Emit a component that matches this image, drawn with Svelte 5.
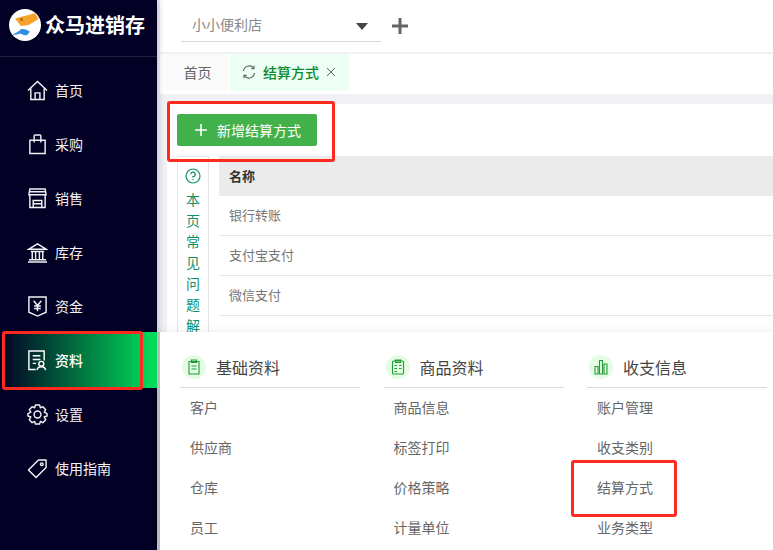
<script lang="ts">
  const nav = [
    { label: '首页', icon: 'home' },
    { label: '采购', icon: 'bag' },
    { label: '销售', icon: 'shop' },
    { label: '库存', icon: 'bank' },
    { label: '资金', icon: 'money' },
    { label: '资料', icon: 'doc', active: true },
    { label: '设置', icon: 'gear' },
    { label: '使用指南', icon: 'tag' }
  ];

  const rows = ['银行转账', '支付宝支付', '微信支付'];
  const helpText = '本页常见问题解答'.split('');

  const groups = [
    { title: '基础资料', icon: 'clip', items: ['客户', '供应商', '仓库', '员工'] },
    { title: '商品资料', icon: 'list', items: ['商品信息', '标签打印', '价格策略', '计量单位'] },
    { title: '收支信息', icon: 'bars', items: ['账户管理', '收支类别', '结算方式', '业务类型'] }
  ];
</script>

<div class="app">
  <aside class="sidebar">
    <div class="brand">
      <svg class="logo" viewBox="0 0 32 32">
        <circle cx="16" cy="16" r="16" fill="#fff" />
        <path d="M6 9.5 L26 4.3 L29.5 10 L19.5 16 L12 17 Z" fill="#f5a227" />
        <circle cx="12.5" cy="10.5" r="1.5" fill="#b5651d" />
        <path d="M3.5 25.5 Q8 24 12.5 20 Q17 19.5 21 22.7 L17.5 26.5 Q14 26 11 24.5 Q7 26.5 3.5 25.5 Z" fill="#2f8fe0" />
      </svg>
      <span class="brand-name">众马进销存</span>
    </div>
    <nav class="nav">
      {#each nav as item}
        <div class="nav-item" class:active={item.active}>
          <svg class="nav-icon" viewBox="0 0 22 22" fill="none" stroke="currentColor" stroke-width="1.5">
            {#if item.icon === 'home'}
              <path d="M1 11 L11 1.5 L21 11 M4 9 V20.5 H18 V9 M8.5 20.5 V13.5 H13.5 V20.5" />
            {:else if item.icon === 'bag'}
              <path d="M3 6.5 H19 V20.5 H3 Z M7.5 9 V2 Q7.5 1 8.5 1 H13.5 Q14.5 1 14.5 2 V9" />
            {:else if item.icon === 'shop'}
              <path d="M3 1 H19 L20 7 H2 Z M3 7 V20.5 H19 V7 M2.5 4 H19.5 M6.5 20.5 V13 H15.5 V20.5 M6.5 16.5 H15.5" />
            {:else if item.icon === 'bank'}
              <path d="M2 7.5 L11 2 L20 7.5 Z M4 10 H18 M5.5 10 V18 M9 10 V18 M13 10 V18 M16.5 10 V18 M2 18.5 H20 M1 21 H21" />
            {:else if item.icon === 'money'}
              <path d="M2 1 H20 V17 L11 21 L2 17 Z M7 5 L11 10 L15 5 M11 10 V16 M7.5 10.5 H14.5 M7.5 13 H14.5" />
            {:else if item.icon === 'doc'}
              <path d="M18 11 V1 H2 V20.5 H9 M6 6 H14 M6 10 H14 M6 14 H9.5" />
              <circle cx="15" cy="14.5" r="2.6" />
              <path d="M10.5 21 Q11 17.5 15 17.5 Q19 17.5 19.5 21" />
            {:else if item.icon === 'gear'}
              <path d="M8.8 1 H13.2 L14 4 L16.6 2.8 L19.6 6 L18 8.6 L21 10 V12.6 L18 13.6 L19.6 16.4 L16.6 19.6 L14 18.2 L13.2 21 H8.8 L8 18.2 L5.4 19.6 L2.4 16.4 L4 13.6 L1 12.6 V10 L4 8.6 L2.4 6 L5.4 2.8 L8 4 Z" stroke-linejoin="round" />
              <circle cx="11" cy="11" r="3.6" />
            {:else if item.icon === 'tag'}
              <path d="M1.5 12.5 L12 2 H20 V10 L9.5 20.5 Z" stroke-linejoin="round" />
              <circle cx="15.5" cy="6.5" r="1.4" />
            {/if}
          </svg>
          <span>{item.label}</span>
        </div>
      {/each}
    </nav>
  </aside>

  <main class="main">
    <header class="topbar">
      <div class="store">
        <span>小小便利店</span>
        <i class="caret"></i>
      </div>
      <svg class="add" viewBox="0 0 16 16"><path d="M8 0 V16 M0 8 H16" stroke="#666" stroke-width="3" /></svg>
    </header>

    <div class="tabs">
      <div class="tab">首页</div>
      <div class="tab current">
        <svg class="refresh" viewBox="0 0 14 14" fill="none" stroke="#666" stroke-width="1.2">
          <path d="M1.5 6 A5.6 5.6 0 0 1 11.5 3.2 M12.5 8 A5.6 5.6 0 0 1 2.5 10.8" />
          <path d="M12 0.8 V3.6 H9.4 M2 13.2 V10.4 H4.6" />
        </svg>
        <span class="tab-name">结算方式</span>
        <svg class="close" viewBox="0 0 10 10"><path d="M1 1 L9 9 M9 1 L1 9" stroke="#666" stroke-width="1" /></svg>
      </div>
    </div>

    <section class="card">
      <button class="add-btn">
        <svg viewBox="0 0 12 12"><path d="M6 0 V12 M0 6 H12" stroke="#fff" stroke-width="1.6" /></svg>
        新增结算方式
      </button>
      <div class="body">
        <div class="help">
          <svg viewBox="0 0 16 16" fill="none" stroke="#0f8f6b" stroke-width="1.2">
            <circle cx="8" cy="8" r="7" />
            <path d="M5.8 6.2 A2.2 2.2 0 1 1 8 8.6 V9.8 M8 11 V12.2" />
          </svg>
          {#each helpText as ch}
            <span>{ch}</span>
          {/each}
        </div>
        <div class="table">
          <div class="thead">名称</div>
          {#each rows as row}
            <div class="row">{row}</div>
          {/each}
        </div>
      </div>
    </section>
  </main>

  <div class="flyout">
    {#each groups as group}
      <div class="group">
        <div class="group-head">
          <span class="badge">
            <svg viewBox="0 0 14 16" fill="none" stroke="#1f9d35" stroke-width="1.1">
              {#if group.icon === 'clip'}
                <path d="M2 2.5 H12 V15 H2 Z M4.5 1 H9.5 V3.5 H4.5 Z M4.5 7 H9.5 M4.5 10 H9.5" />
              {:else if group.icon === 'list'}
                <path d="M2.5 2 Q1.5 2 1.5 3 V14 Q1.5 15 2.5 15 H11.5 Q12.5 15 12.5 14 V3 Q12.5 2 11.5 2 Z M4.5 1 H9.5 V3.5 H4.5 Z M3.5 6.5 H6 M8 6.5 H10.5 M3.5 9.5 H6 M8 9.5 H10.5 M3.5 12.5 H6" />
              {:else}
                <path d="M1 7.5 H4 V15 H1 Z M5.5 1.5 H8.5 V15 H5.5 Z M10 5 H13 V15 H10 Z" stroke-linejoin="round" />
              {/if}
            </svg>
          </span>
          <span class="group-title">{group.title}</span>
        </div>
        {#each group.items as item}
          <div class="group-item">{item}</div>
        {/each}
      </div>
    {/each}
  </div>

  <div class="mark mark-nav"></div>
  <div class="mark mark-btn"></div>
  <div class="mark mark-link"></div>
</div>

<style>
  :global(body) {
    margin: 0;
    overflow: hidden;
  }

  .app {
    position: relative;
    display: flex;
    width: 773px;
    height: 550px;
    overflow: hidden;
    background: #f0f0f5;
    font-family: "Noto Sans CJK SC", "Liberation Sans", sans-serif;
  }

  .sidebar {
    position: relative;
    z-index: 1;
    width: 157px;
    flex-shrink: 0;
    background: #020024;
    color: #f2f2f5;
    box-shadow: 2px 0 6px rgba(0, 0, 0, 0.18);
  }

  .brand {
    display: flex;
    align-items: center;
    gap: 4px;
    height: 57px;
    padding: 0 0 7px 9px;
    box-sizing: border-box;
    border-bottom: 1px solid #22213f;
  }

  .logo {
    width: 32px;
    height: 32px;
  }

  .brand-name {
    color: #fff;
    font-size: 20px;
    font-weight: 700;
    line-height: 1;
  }

  .nav {
    padding-top: 6px;
  }

  .nav-item {
    display: flex;
    align-items: center;
    gap: 7px;
    height: 54px;
    padding-left: 27px;
    font-size: 14px;
  }

  .nav-item.active {
    margin: -1px 0;
    height: 56px;
    background: linear-gradient(90deg, #020024, #00e25b);
    color: #fff;
    font-weight: 500;
  }

  .nav-icon {
    width: 21px;
    height: 21px;
    flex-shrink: 0;
  }

  .main {
    flex: 1;
    min-width: 0;
    margin-left: 3px;
  }

  .topbar {
    display: flex;
    align-items: center;
    gap: 11px;
    height: 52px;
    margin-bottom: 2px;
    padding-left: 21px;
    background: #fff;
  }

  .store {
    display: flex;
    align-self: flex-start;
    align-items: center;
    justify-content: space-between;
    width: 200px;
    height: 42px;
    padding: 8px 13px 2px 11px;
    box-sizing: border-box;
    border-bottom: 1px solid #d9d9d9;
    color: #888;
    font-size: 14px;
  }

  .caret {
    width: 0;
    height: 0;
    margin-top: 5px;
    border-top: 7px solid #444;
    border-left: 6px solid transparent;
    border-right: 6px solid transparent;
  }

  .add {
    width: 16px;
    height: 16px;
  }

  .tabs {
    display: flex;
    align-items: flex-start;
    gap: 2px;
    height: 40px;
    padding-left: 5px;
    background: #fff;
  }

  .tab {
    display: flex;
    align-items: center;
    justify-content: center;
    width: 63px;
    height: 37px;
    padding: 0 0 2px 2px;
    box-sizing: border-box;
    background: #fafafa;
    color: #666;
    font-size: 14px;
  }

  .tab.current {
    justify-content: flex-start;
    width: 119px;
    padding-left: 12px;
    gap: 7px;
    background: #edfff4;
  }

  .tab-name {
    color: #0a8a2c;
    font-weight: 500;
  }

  .refresh {
    width: 14px;
    height: 14px;
  }

  .close {
    width: 10px;
    height: 10px;
  }

  .card {
    margin: 10px 0 0 7px;
    height: 446px;
    padding: 10px 0 0 10px;
    box-sizing: border-box;
    background: #fff;
  }

  .add-btn {
    display: flex;
    align-items: center;
    gap: 10px;
    width: 140px;
    height: 32px;
    padding: 0 0 0 18px;
    border: none;
    border-radius: 2px;
    background: #43b14b;
    color: #fff;
    font-family: inherit;
    font-size: 14px;
    white-space: nowrap;
  }

  .add-btn svg {
    width: 12px;
    height: 12px;
  }

  .body {
    display: flex;
    gap: 10px;
    margin-top: 10px;
  }

  .help {
    display: flex;
    flex-direction: column;
    align-items: center;
    width: 32px;
    padding-top: 11px;
    box-sizing: border-box;
    border: 1px solid #e5e5e5;
    color: #0f8f6b;
    font-size: 14px;
  }

  .help svg {
    width: 16px;
    height: 16px;
    margin-bottom: 5px;
  }

  .help span {
    height: 21px;
    line-height: 21px;
  }

  .table {
    flex: 1;
    font-size: 13px;
    color: #777;
  }

  .thead {
    display: flex;
    align-items: center;
    height: 40px;
    padding: 0 0 2px 10px;
    box-sizing: border-box;
    background: #ebebeb;
    color: #333;
    font-weight: 700;
  }

  .row {
    display: flex;
    align-items: center;
    height: 40px;
    padding: 0 0 2px 10px;
    box-sizing: border-box;
    border-bottom: 1px solid #e8e8e8;
  }

  .flyout {
    position: absolute;
    z-index: 2;
    left: 157px;
    top: 332px;
    right: 0;
    bottom: 0;
    display: grid;
    grid-template-columns: repeat(3, 180px);
    gap: 23.5px;
    padding-left: 20px;
    background: #fff;
    box-shadow: 0 -2px 6px rgba(0, 0, 0, 0.06);
    border-left: 3px solid;
    border-image: linear-gradient(90deg, #bbb 66%, #4caf50 66%) 1;
  }

  .group-head {
    display: flex;
    align-items: flex-end;
    gap: 10px;
    height: 56px;
    padding: 0 0 8px 2px;
    box-sizing: border-box;
    border-bottom: 1px solid #d9d9d9;
  }

  .badge {
    display: flex;
    align-items: center;
    justify-content: center;
    width: 24px;
    height: 24px;
    border-radius: 50%;
    background: #e4fbe4;
  }

  .badge svg {
    width: 14px;
    height: 16px;
  }

  .group-title {
    color: #444;
    font-size: 16px;
    line-height: 24px;
  }

  .group-item {
    display: flex;
    align-items: center;
    height: 40px;
    padding: 0 0 2px 10px;
    box-sizing: border-box;
    color: #666;
    font-size: 14px;
  }

  .mark {
    position: absolute;
    z-index: 3;
    box-sizing: border-box;
    border: 3px solid #ff2a1f;
    border-radius: 3px;
  }

  .mark-nav {
    left: 2px;
    top: 331px;
    width: 141px;
    height: 59px;
  }

  .mark-btn {
    left: 167px;
    top: 101px;
    width: 168px;
    height: 61px;
  }

  .mark-link {
    left: 571px;
    top: 460px;
    width: 106px;
    height: 57px;
  }
</style>
